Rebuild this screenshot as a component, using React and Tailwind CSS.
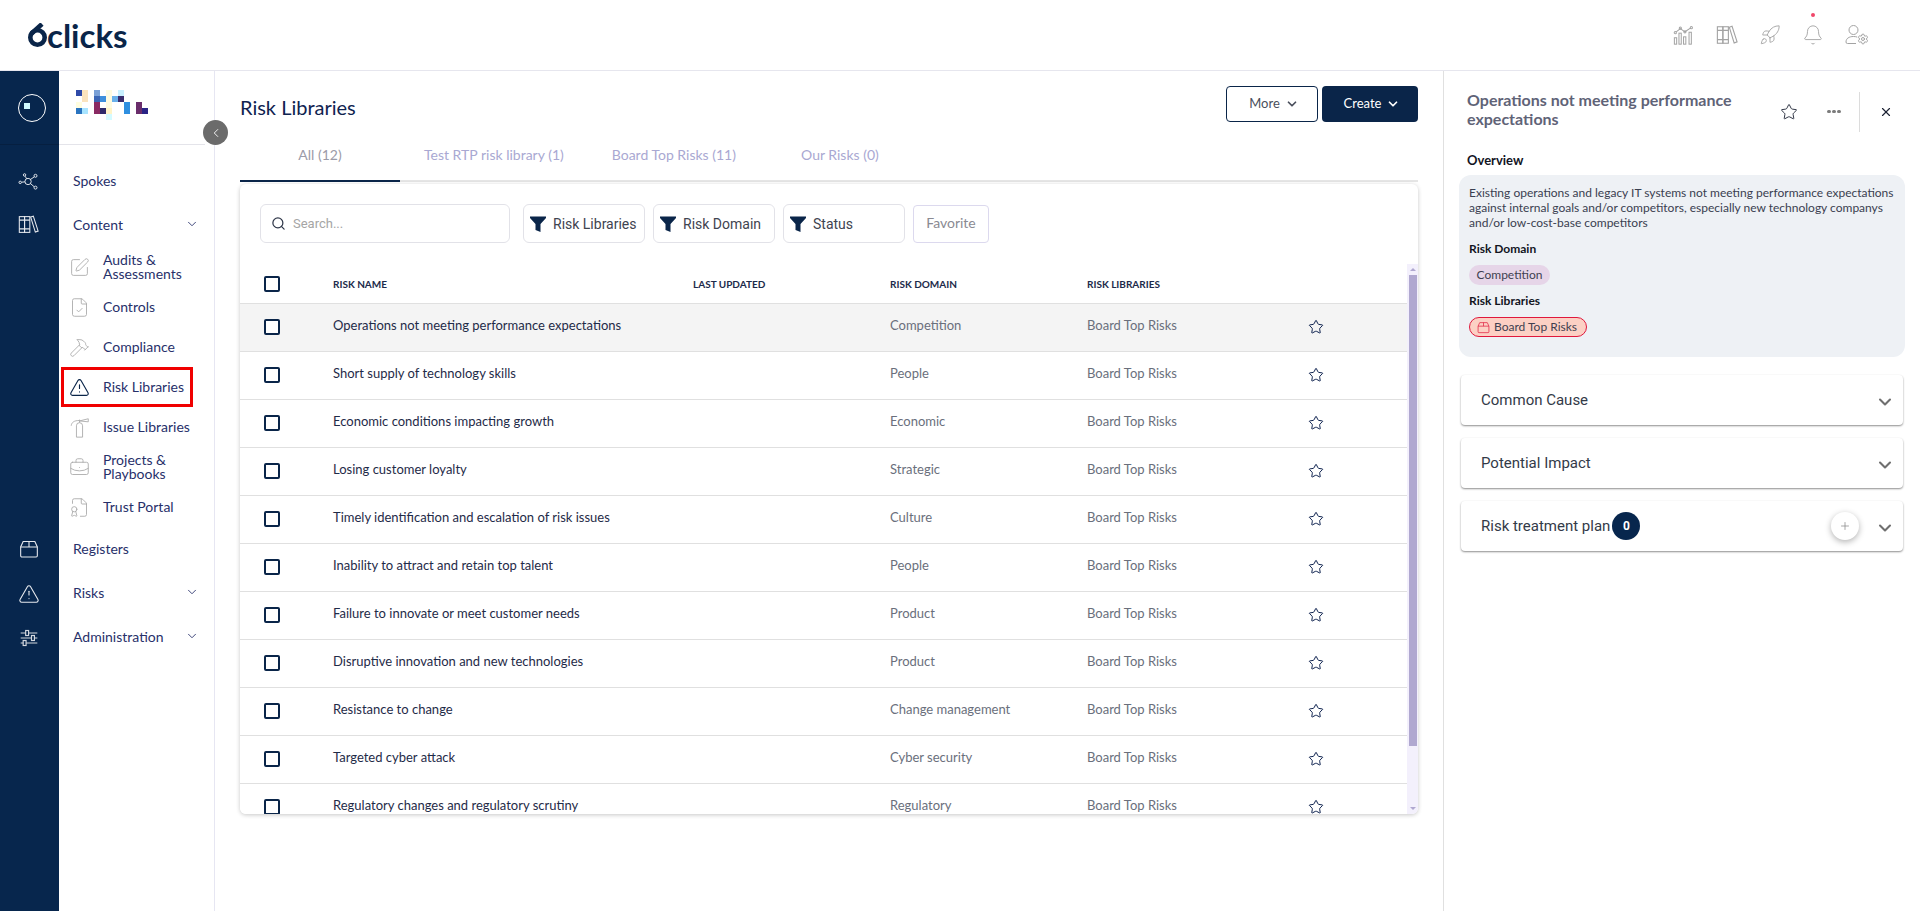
import React from 'react';
import { ChevronDown, ChevronLeft, Search, Star, X, Plus, SquarePen, FileCheck, Hammer, TriangleAlert, BriefcaseBusiness, FileBadge, Rocket, Bell, Settings } from 'lucide-react';

const rows = [
  ['Operations not meeting performance expectations', 'Competition'],
  ['Short supply of technology skills', 'People'],
  ['Economic conditions impacting growth', 'Economic'],
  ['Losing customer loyalty', 'Strategic'],
  ['Timely identification and escalation of risk issues', 'Culture'],
  ['Inability to attract and retain top talent', 'People'],
  ['Failure to innovate or meet customer needs', 'Product'],
  ['Disruptive innovation and new technologies', 'Product'],
  ['Resistance to change', 'Change management'],
  ['Targeted cyber attack', 'Cyber security'],
  ['Regulatory changes and regulatory scrutiny', 'Regulatory'],
];

const pixels = [
  [76,90,'#2f4aa8'],[82,90,'#fbe3bd'],[94,90,'#7aa0d6'],[106,90,'#fffbe0'],[118,90,'#c8f0ff'],
  [82,96,'#fbe3bd'],[94,96,'#3b66b5'],[100,96,'#3f8fdc'],[106,96,'#fffbe0'],[112,96,'#6ab0ea'],[118,96,'#3a2d6e'],
  [76,102,'#fffde0'],[94,102,'#8a2a63'],[106,102,'#fffbe0'],[124,102,'#2f8fe0'],[136,102,'#6a2d6b'],
  [76,108,'#2a74c0'],[82,108,'#a8e4ff'],[94,108,'#8a2a63'],[100,108,'#2e2a6a'],[106,108,'#fff4c8'],[124,108,'#2f8fe0'],[136,108,'#6a2d6b'],[142,108,'#2a2485'],
  [106,114,'#d4fbff'],
];

function Books({ className }) {
  return (
    <svg viewBox="0 0 24 24" fill="none" stroke="currentColor" strokeWidth="1.2" className={className}>
      <rect x="1.5" y="3" width="6" height="18" />
      <rect x="7.5" y="3" width="6" height="18" />
      <path d="M1.5 7h12M1.5 17h12" />
      <path d="M14.5 3.5l3-1 5.5 17-3.2 1.2z" />
    </svg>
  );
}
function Network({ className }) {
  return (
    <svg viewBox="0 0 24 24" fill="none" stroke="currentColor" strokeWidth="1.1" className={className}>
      <circle cx="11.5" cy="12" r="3.6" />
      <circle cx="2.5" cy="13" r="1.4" /><circle cx="7.5" cy="4.5" r="1.4" />
      <circle cx="20" cy="5.5" r="1.7" /><circle cx="20" cy="19" r="1.7" />
      <path d="M4 12.8l4-.4M8.2 6l1.7 2.8M18.6 6.7l-4.4 3M18.5 18l-4.3-3.7" />
    </svg>
  );
}
function Box({ className }) {
  return (
    <svg viewBox="0 0 24 24" fill="none" stroke="currentColor" strokeWidth="1.3" className={className}>
      <path d="M5 3h14l3 6.5V20a1.5 1.5 0 0 1-1.5 1.5h-17A1.5 1.5 0 0 1 2 20V9.500z" />
      <path d="M2 9.500h20M12 3v6.500" />
    </svg>
  );
}
function Sliders({ className }) {
  return (
    <svg viewBox="0 0 24 24" fill="none" stroke="currentColor" strokeWidth="1.4" className={className}>
      <path d="M2 6h6M11.500 6H22M2 12h13M18.500 12H22M2 18h3M8.500 18H22" />
      <rect x="8" y="3" width="3.500" height="6" /><rect x="15" y="9" width="3.500" height="6" /><rect x="5" y="15" width="3.500" height="6" />
    </svg>
  );
}
function ChartIcon({ className }) {
  return (
    <svg viewBox="0 0 24 24" fill="none" stroke="currentColor" strokeWidth="1.1" className={className}>
      <path d="M3.500 8.500l4.500-3.500 5 3.500 6-4" />
      <circle cx="2.500" cy="9.500" r="1.200" /><circle cx="8" cy="4.500" r="1.200" /><circle cx="13" cy="8.500" r="1.200" /><circle cx="20" cy="4" r="1.200" />
      <rect x="1.500" y="15" width="2.500" height="7" /><rect x="6.500" y="10" width="2.500" height="12" /><rect x="11.500" y="14" width="2.500" height="8" /><rect x="17.500" y="9" width="2.500" height="13" />
    </svg>
  );
}
function UserGear({ className }) {
  return (
    <svg viewBox="0 0 24 24" fill="none" stroke="currentColor" strokeWidth="1" className={className}>
      <circle cx="8.500" cy="7" r="4.500" />
      <path d="M11 20.500H2.500a1.500 1.500 0 0 1-1.500-1.500c0-3.500 3-5.500 7.500-5.500 1.500 0 2.700.2 3.700.6" />
      <Settings x="12" y="10" width="12" height="12" strokeWidth="2" />
    </svg>
  );
}
function Extinguisher({ className, strokeWidth }) {
  return (
    <svg viewBox="0 0 24 24" fill="none" stroke="currentColor" strokeWidth={strokeWidth} className={className}>
      <path d="M8.500 10a3.500 3.500 0 0 1 7 0v13h-7z" />
      <path d="M12 6.500V3M12 4.500l10-2.500v3.500L12 4.500M11.500 4C6 4 3 6 2.500 10" />
    </svg>
  );
}
function Funnel() {
  return (
    <svg viewBox="0 0 16 16" className="w-[16px] h-[16px] shrink-0 text-[#0a2549]" fill="currentColor">
      <path d="M0 .500h16v1.500L10.500 8v8l-5-2V8L0 2z" />
    </svg>
  );
}
function Check() {
  return <span className="block w-[16px] h-[16px] rounded-[2px] border-2 border-[#0a2549] bg-white" />;
}

function Top({ label, chevron }) {
  return (
    <div className="h-[44px] flex items-center pl-[14px] pr-[15px] pb-[2px] justify-between text-[14px] text-[#27306a]">
      <span>{label}</span>
      {chevron && <ChevronDown className="w-[14px] h-[14px] text-[#27306a]" strokeWidth={1.5} />}
    </div>
  );
}
function Sub({ Icon, label, active }) {
  return (
    <div className={`h-[40px] w-[132px] ml-[2px] flex items-center border-[3px] pl-[5px] text-[14px] leading-[14px] text-[#27306a] ${active ? 'border-[#f00000]' : 'border-transparent'}`}>
      <Icon className={`w-[21px] h-[21px] shrink-0 ${active ? 'text-[#0a2549]' : 'text-[#a9a9a9]'}`} strokeWidth={active ? 1.3 : 1} />
      <span className="ml-[13px] whitespace-pre-line">{label}</span>
    </div>
  );
}
function Filter({ label, w }) {
  return (
    <div className={`h-[39px] ${w} border border-[#e2e2e8] rounded-[6px] flex items-center pl-[6px] text-[14px] text-[#3f4450] font-[Roboto,sans-serif]`}>
      <Funnel />
      <span className="ml-[7px] pt-[1px]">{label}</span>
    </div>
  );
}
function Accordion({ label, badge, plus }) {
  return (
    <div className="h-[50px] rounded-[4px] bg-white shadow-[0_1px_2px_rgba(0,0,0,0.45)] flex items-center pl-[20px] pr-[8px] font-[Roboto,sans-serif] text-[15px] text-[#333a48]">
      <span>{label}</span>
      {badge && <span className="ml-[2px] w-[28px] h-[28px] rounded-full bg-[#07264d] text-white text-[12px] font-bold flex items-center justify-center">{badge}</span>}
      <span className="flex-1" />
      {plus && (
        <span className="mr-[16px] w-[28px] h-[28px] rounded-full bg-white shadow-[0_2px_6px_rgba(0,0,0,0.3)] flex items-center justify-center">
          <Plus className="w-[12px] h-[12px] text-[#8a8a8a]" strokeWidth={1.5} />
        </span>
      )}
      <ChevronDown className="w-[20px] h-[20px] text-[#6f6f6f] mt-[3px]" strokeWidth={2.5} />
    </div>
  );
}

export default function App() {
  return (
    <div className="h-[911px] w-[1920px] overflow-hidden flex flex-col bg-white font-[Lato,sans-serif]">
      <header className="h-[71px] shrink-0 border-b border-[#e6e6ee] flex items-center justify-between">
        <div className="flex items-center ml-[28px] text-[#0a2549]">
          <svg viewBox="0 0 19 24" className="w-[19px] h-[24px]" fill="none" stroke="currentColor" strokeWidth="4.600">
            <circle cx="9.500" cy="14.500" r="7.200" />
            <path d="M3 11L14 1" />
          </svg>
          <span className="text-[33px] leading-[30px] font-bold">clicks</span>
        </div>
        <div className="flex items-center text-[#a3a3a3] mr-[51px] gap-[21px]">
          <ChartIcon className="w-[22px] h-[22px]" />
          <Books className="w-[22px] h-[22px]" />
          <Rocket className="w-[22px] h-[22px]" strokeWidth={1} />
          <span className="relative">
            <Bell className="w-[22px] h-[22px]" strokeWidth={1} />
            <span className="absolute left-[9px] top-[-11px] w-[4px] h-[4px] rounded-full bg-[#f0476a]" />
          </span>
          <UserGear className="w-[24px] h-[24px]" />
        </div>
      </header>

      <div className="flex flex-1 min-h-0">
        <aside className="w-[59px] shrink-0 bg-[#07264d] text-white flex flex-col items-center">
          <div className="h-[74px] w-full shrink-0 border-b border-[#061f40] flex items-center justify-center pl-[5px]">
            <span className="w-[28px] h-[28px] rounded-full border border-white flex pl-[5px] pt-[8px]">
              <span className="block w-[6px] h-[6px] bg-[#cffafe]" />
            </span>
          </div>
          <Network className="w-[21px] h-[21px] mt-[26px] mr-[2px] text-[#e6e9ee]" />
          <Books className="w-[21px] h-[21px] mt-[22px] mr-[2px] text-[#e6e9ee]" />
          <Box className="w-[20px] h-[20px] mt-[304px] mr-[2px] text-[#e6e9ee]" />
          <TriangleAlert className="w-[22px] h-[22px] mt-[24px] mr-[2px] text-[#e6e9ee]" strokeWidth={1.2} />
          <Sliders className="w-[20px] h-[20px] mt-[23px] mr-[2px] text-[#d3d7de]" />
        </aside>

        <nav className="relative w-[156px] shrink-0 border-r border-[#e6e6f2]">
          <div className="h-[74px] mr-[9px] border-b border-[#e4e4ea] pl-[17px] pt-[19px]">
            <svg viewBox="76 90 72 30" className="w-[72px] h-[30px]" shapeRendering="crispEdges">
              {pixels.map(([x, y, c], i) => <rect key={i} x={x} y={y} width="6" height="6" fill={c} />)}
            </svg>
          </div>
          <span className="absolute right-[-14px] top-[49px] w-[25px] h-[25px] rounded-full bg-[#6b6b6b] flex items-center justify-center z-10">
            <ChevronLeft className="w-[14px] h-[14px] text-white" strokeWidth={1.5} />
          </span>
          <div className="pt-[14px]">
            <Top label="Spokes" />
            <Top label="Content" chevron />
            <Sub Icon={SquarePen} label={'Audits &\nAssessments'} />
            <Sub Icon={FileCheck} label="Controls" />
            <Sub Icon={Hammer} label="Compliance" />
            <Sub Icon={TriangleAlert} label="Risk Libraries" active />
            <Sub Icon={Extinguisher} label="Issue Libraries" />
            <Sub Icon={BriefcaseBusiness} label={'Projects &\nPlaybooks'} />
            <Sub Icon={FileBadge} label="Trust Portal" />
            <Top label="Registers" />
            <Top label="Risks" chevron />
            <Top label="Administration" chevron />
          </div>
        </nav>

        <main className="w-[1229px] shrink-0 pl-[25px] pr-[25px] pt-[15px] border-r border-[#e0e0e0]">
          <div className="h-[36px] flex items-center justify-between">
            <h1 className="text-[20px] font-normal text-[#0f2350] mt-[6px]">Risk Libraries</h1>
            <div className="flex gap-[4px] text-[13px]">
              <button className="w-[92px] h-[36px] pl-[4px] rounded-[4px] border border-[#0a2549] text-[#4a4f5c] flex items-center justify-center gap-[5px]">
                More <ChevronDown className="w-[14px] h-[14px]" strokeWidth={3} />
              </button>
              <button className="w-[96px] h-[36px] pl-[4px] rounded-[4px] bg-[#0a2549] text-white flex items-center justify-center gap-[5px]">
                Create <ChevronDown className="w-[14px] h-[14px]" strokeWidth={3} />
              </button>
            </div>
          </div>

          <div className="h-[60px] flex items-end border-b-2 border-[#e5e5e5] text-[14px] text-[#a9a8d2]">
            <div className="min-w-[160px] h-[60px] pb-[15px] flex items-end justify-center border-b-[2px] border-[#0a2549] mb-[-2px] text-[#9b9ba8]">All (12)</div>
            <div className="min-w-[160px] px-6 h-[60px] pb-[15px] flex items-end justify-center">Test RTP risk library (1)</div>
            <div className="min-w-[160px] px-6 h-[60px] pb-[15px] flex items-end justify-center">Board Top Risks (11)</div>
            <div className="min-w-[160px] px-6 h-[60px] pb-[15px] flex items-end justify-center">Our Risks (0)</div>
          </div>

          <section className="mt-[2px] h-[630px] rounded-[6px] bg-white shadow-[0_1px_4px_rgba(0,0,0,0.22)] overflow-hidden flex flex-col">
            <div className="h-[80px] shrink-0 pt-[20px] pl-[20px] flex gap-[8px] items-start">
              <div className="w-[250px] h-[39px] border border-[#e2e2e8] rounded-[6px] flex items-center pl-[10px] text-[13px] text-[#a5a5a5] font-[Roboto,sans-serif] mr-[5px]">
                <Search className="w-[15px] h-[15px] text-[#30384a] mr-[7px]" strokeWidth={2} />
                Search...
              </div>
              <Filter label="Risk Libraries" w="w-[122px]" />
              <Filter label="Risk Domain" w="w-[122px]" />
              <Filter label="Status" w="w-[122px]" />
              <div className="w-[76px] h-[38px] mt-[1px] border border-[#dcd9ee] rounded-[4px] flex items-center justify-center text-[14px] text-[#8a8a92] pb-[3px]">Favorite</div>
            </div>
            <div className="flex flex-1 min-h-0">
              <div className="flex-1 min-w-0 overflow-hidden">
                <div className="h-[40px] grid grid-cols-[93px_360px_197px_197px_1fr] items-center border-b border-[#e0e0e0] text-[10px] font-bold text-[#1c2a4a] pt-[2px]">
                  <span className="pl-[24px] mt-[-1px]"><Check /></span>
                  <span>RISK NAME</span>
                  <span>LAST UPDATED</span>
                  <span>RISK DOMAIN</span>
                  <span>RISK LIBRARIES</span>
                </div>
                {rows.map(([name, domain], i) => (
                  <div key={name} className={`h-[48px] grid grid-cols-[93px_360px_197px_197px_1fr] items-center border-b border-[#e0e0e0] ${i === 0 ? 'bg-[#f4f4f4]' : 'bg-white'}`}>
                    <span className="pl-[24px] pb-[1px]"><Check /></span>
                    <span className="text-[13px] text-[#1f2b48] pb-[3px]">{name}</span>
                    <span />
                    <span className="text-[13px] text-[#6a6f7c] pb-[3px]">{domain}</span>
                    <span className="flex items-center text-[13px] text-[#6a6f7c]">
                      <span className="w-[221px] pb-[3px]">Board Top Risks</span>
                      <Star className="w-[16px] h-[16px] mb-[1px] text-[#0f2350]" strokeWidth={1.5} />
                    </span>
                  </div>
                ))}
              </div>
              <div className="w-[11px] shrink-0 bg-[#f3f0fc] flex flex-col items-center pt-[4px]">
                <span className="block w-0 h-0 border-x-[3px] border-x-transparent border-b-[3px] border-b-[#b0a8d0]" />
                <span className="block w-[8px] h-[471px] mt-[4px] bg-[#b0a8d0]" />
                <span className="block w-0 h-0 mt-auto mb-[4px] border-x-[3px] border-x-transparent border-t-[3px] border-t-[#b0a8d0]" />
              </div>
            </div>
          </section>
        </main>

        <aside className="flex-1 min-w-0 px-[15px] pt-[20px]">
          <div className="flex items-center h-[41px] pl-[8px]">
            <h2 className="w-[290px] text-[16px] leading-[19px] font-bold text-[#5f6377] mt-[-5px]">Operations not meeting performance expectations</h2>
            <Star className="w-[18px] h-[18px] ml-[23px] text-[#1c2233]" strokeWidth={1.2} />
            <span className="ml-[29px] flex gap-[1.5px]">
              <span className="block w-[3.500px] h-[3.500px] rounded-full bg-[#7c7c7c]" />
              <span className="block w-[3.500px] h-[3.500px] rounded-full bg-[#7c7c7c]" />
              <span className="block w-[3.500px] h-[3.500px] rounded-full bg-[#7c7c7c]" />
            </span>
            <span className="block w-px h-[40px] bg-[#dcdcdc] ml-[18px]" />
            <X className="w-[14px] h-[14px] ml-[19px] text-[#1c2233]" strokeWidth={2} />
          </div>
          <div className="mt-[19px] pl-[8px] h-[19px] leading-[19px] text-[13px] font-bold text-[#12151f]">Overview</div>
          <div className="mt-[5px] h-[182px] rounded-[12px] bg-[#eef1f5] pl-[10px] pr-[8px] pt-[10px]">
            <p className="text-[12px] leading-[15px] text-[#3a4050]">Existing operations and legacy IT systems not meeting performance expectations against internal goals and/or competitors, especially new technology companys and/or low-cost-base competitors</p>
            <div className="mt-[11px] h-[16px] leading-[16px] text-[12px] font-bold text-[#12151f]">Risk Domain</div>
            <div className="mt-[8px] h-[20px] w-[81px] rounded-full bg-[#e6d5e8] flex items-center justify-center text-[12px] text-[#3f3f50]">Competition</div>
            <div className="mt-[8px] h-[16px] leading-[16px] text-[12px] font-bold text-[#12151f]">Risk Libraries</div>
            <div className="mt-[8px] h-[20px] w-[118px] rounded-full bg-[#fcd0c4] border border-[#e0183c] flex items-center pl-[7px] text-[12px] text-[#3f3f50]">
              <Box className="w-[13px] h-[13px] mr-[4px] text-[#e0183c]" />
              Board Top Risks
            </div>
          </div>
          <div className="mt-[18px] mx-[2px] flex flex-col gap-[13px]">
            <Accordion label="Common Cause" />
            <Accordion label="Potential Impact" />
            <Accordion label="Risk treatment plan" badge="0" plus />
          </div>
        </aside>
      </div>
    </div>
  );
}
